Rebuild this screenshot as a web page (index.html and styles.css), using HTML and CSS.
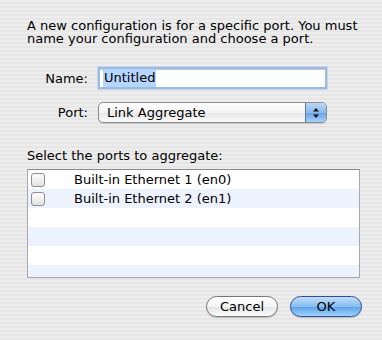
FILE: index.html
```html
<!DOCTYPE html>
<html lang="en">
<head>
    <meta charset="UTF-8">
    <title>New Configuration</title>
    <link rel="stylesheet" href="styles.css">
</head>
<body>
    <div class="sheet">
        <p class="message">A new configuration is for a specific port. You must name your configuration and choose a port.</p>

        <div class="form">
            <label class="label" for="name">Name:</label>
            <div class="field">
                <span class="selected">Untitled</span>
            </div>

            <label class="label">Port:</label>
            <div class="popup">
                <span class="popup-text">Link Aggregate</span>
                <span class="stepper">
                    <svg width="8" height="12" viewBox="0 0 8 12">
                        <path d="M4 1 L7 4.5 L1 4.5 Z" fill="#111"/>
                        <path d="M4 11 L7 7.5 L1 7.5 Z" fill="#111"/>
                    </svg>
                </span>
            </div>
        </div>

        <p class="list-title">Select the ports to aggregate:</p>
        <div class="list">
            <div class="row"><span class="check"></span><span class="port">Built-in Ethernet 1 (en0)</span></div>
            <div class="row"><span class="check"></span><span class="port">Built-in Ethernet 2 (en1)</span></div>
            <div class="row"></div>
            <div class="row"></div>
            <div class="row"></div>
            <div class="row"></div>
        </div>

        <div class="buttons">
            <button class="btn">Cancel</button>
            <button class="btn btn-default">OK</button>
        </div>
    </div>
</body>
</html>
```

FILE: styles.css
```css
html, body {
    margin: 0;
    height: 100%;
}

body {
    font-family: "DejaVu Sans", "Lucida Grande", sans-serif;
    font-size: 13px;
    color: #000;
    background: repeating-linear-gradient(to bottom, #ededed 0, #ededed 2px, #e6e6e6 2px, #e6e6e6 4px);
}

.sheet {
    padding: 19px 22px 0 27px;
}

.message {
    margin: 0;
    line-height: 13px;
    width: 345px;
}

.form {
    display: grid;
    grid-template-columns: 61px 229px;
    column-gap: 10px;
    row-gap: 13px;
    align-items: center;
    margin-top: 22px;
}

.label {
    text-align: right;
}

.field {
    height: 18px;
    border: 2px solid #9cbbe0;
    outline: 1px solid #c4d6ee;
    background: #fff;
    display: flex;
    align-items: center;
    padding-left: 3px;
    box-shadow: inset 0 1px 0 #c8c8c8;
}

.selected {
    background: #b5d5ff;
    padding: 1px 1px 2px;
}

.popup {
    height: 19px;
    border: 1px solid #8c8c8c;
    border-radius: 5px;
    background: linear-gradient(to bottom, #ffffff 0%, #f3f3f3 50%, #e6e6e6 51%, #fafafa 100%);
    display: flex;
    align-items: center;
    overflow: hidden;
    box-shadow: 0 1px 1px rgba(0, 0, 0, 0.15);
}

.popup-text {
    flex: 1;
    padding-left: 8px;
}

.stepper {
    width: 20px;
    height: 19px;
    border-left: 1px solid #5a77a8;
    background: linear-gradient(to bottom, #bcd6f5 0%, #8eb8ec 50%, #6aa0e6 51%, #a6d0fa 100%);
    display: flex;
    align-items: center;
    justify-content: center;
}

.list-title {
    margin: 26px 0 0;
    line-height: 13px;
}

.list {
    margin-top: 7px;
    width: 331px;
    height: 107px;
    border: 1px solid #a8a8a8;
    border-top-color: #8a8a8a;
    background: #fff;
    overflow: hidden;
}

.row {
    height: 19px;
    display: flex;
    align-items: center;
}

.row:nth-child(even) {
    background: #edf3fe;
}

.check {
    width: 12px;
    height: 12px;
    margin-left: 3px;
    border: 1px solid #8e8e8e;
    border-radius: 3px;
    background: linear-gradient(to bottom, #ffffff 0%, #f0f0f0 50%, #e2e2e2 100%);
}

.port {
    margin-left: 29px;
}

.buttons {
    display: flex;
    justify-content: flex-end;
    gap: 12px;
    margin-top: 18px;
    width: 335px;
}

.btn {
    width: 72px;
    height: 21px;
    font-family: inherit;
    font-size: 13px;
    color: #000;
    border: 1px solid #777;
    border-radius: 11px;
    background: linear-gradient(to bottom, #ffffff 0%, #f4f4f4 50%, #e4e4e4 51%, #fbfbfb 100%);
    box-shadow: 0 1px 1px rgba(0, 0, 0, 0.2);
    padding: 0;
}

.btn-default {
    border-color: #2f4f9a;
    background: linear-gradient(to bottom, #c3ddf8 0%, #88bdf0 50%, #5aa2ea 51%, #9fd1fb 100%);
}
```
